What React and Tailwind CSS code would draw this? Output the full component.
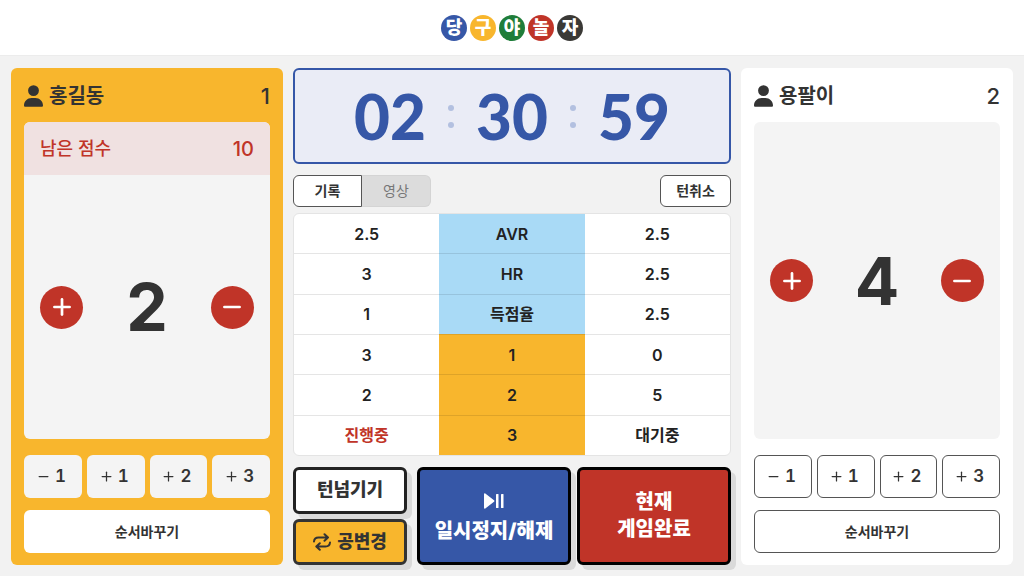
import React from 'react';
import { Minus, Plus } from 'lucide-react';
import { FaUser } from 'react-icons/fa6';

const logo = [
  { char: '당', color: 'bg-[#3657a7]' },
  { char: '구', color: 'bg-[#f8b62d]' },
  { char: '야', color: 'bg-[#1f7d3a]' },
  { char: '놀', color: 'bg-[#c03428]' },
  { char: '자', color: 'bg-[#3a3936]' },
];

const records = [
  { left: '2.5', label: 'AVR', right: '2.5', summary: true },
  { left: '3', label: 'HR', right: '2.5', summary: true },
  { left: '1', label: '득점율', right: '2.5', summary: true },
  { left: '3', label: '1', right: '0' },
  { left: '2', label: '2', right: '5' },
  { left: '진행중', label: '3', right: '대기중', playing: true },
];

const steps = [-1, 1, 2, 3];

const RoundButton = ({ label, children }) => (
  <button
    aria-label={label}
    className="flex h-[43px] w-[43px] items-center justify-center rounded-full bg-[#c03428] text-white"
  >
    {children}
  </button>
);

const PlayerPanel = ({ name, order, score, remaining, active }) => (
  <section
    className={`flex flex-col rounded-md px-[13px] py-3 ${active ? 'bg-[#f8b62d]' : 'bg-white'}`}
  >
    <div className="flex h-8 items-center justify-between">
      <h2 className="flex items-center gap-1.5 text-xl font-bold">
        <FaUser className="h-[22px] w-[19px]" />
        {name}
      </h2>
      <span className="text-[22px] font-medium">{order}</span>
    </div>

    {/* Score */}
    <div className="mt-2.5 flex flex-1 flex-col overflow-hidden rounded-md bg-[#f4f4f4]">
      {remaining !== undefined && (
        <div className="flex h-[53px] items-center justify-between bg-[#f0e1e1] px-4 text-[#c03428]">
          <span className="text-lg font-medium">남은 점수</span>
          <span className="text-xl font-medium">{remaining}</span>
        </div>
      )}
      <div className="flex flex-1 items-center justify-between px-4">
        <RoundButton label="점수 올리기">
          <Plus size={26} strokeWidth={2.5} />
        </RoundButton>
        <span className="text-[66px] leading-none font-bold">{score}</span>
        <RoundButton label="점수 내리기">
          <Minus size={26} strokeWidth={2.5} />
        </RoundButton>
      </div>
    </div>

    {/* Quick steps */}
    <div className="mt-4 grid grid-cols-4 gap-[5px]">
      {steps.map((step) => (
        <button
          key={step}
          className={`flex h-[43px] items-center justify-center gap-1 rounded-md pr-1 text-[17px] font-semibold tabular-nums ${
            active ? 'bg-[#f4f4f4]' : 'border border-[#555] bg-white'
          }`}
        >
          {step < 0 ? <Minus size={15} strokeWidth={2} /> : <Plus size={15} strokeWidth={2} />}
          {Math.abs(step)}
        </button>
      ))}
    </div>
    <button
      className={`mt-3 h-[43px] rounded-md bg-white text-sm font-bold ${
        active ? '' : 'border border-[#555]'
      }`}
    >
      순서바꾸기
    </button>
  </section>
);

const ClockDots = () => (
  <div className="flex flex-col gap-[11px]">
    <span className="h-1.5 w-1.5 rounded-full bg-[#b3c0e0]" />
    <span className="h-1.5 w-1.5 rounded-full bg-[#b3c0e0]" />
  </div>
);

const Clock = () => (
  <div
    role="timer"
    className="flex h-24 items-center justify-center gap-[22px] rounded-md border-2 border-[#3657a7] bg-[#eaecf6] font-['Lato',sans-serif] text-[62px] leading-none font-black text-[#3657a7]"
  >
    <span>02</span>
    <ClockDots />
    <span>30</span>
    <ClockDots />
    <span>59</span>
  </div>
);

const RecordTable = () => (
  <div className="mt-1.5 flex flex-1 flex-col overflow-hidden rounded-md border border-[#e4e4e4] bg-white">
    <table className="w-full flex-1 table-fixed text-center text-base font-semibold text-[#222]">
      <tbody>
        {records.map((row, i) => (
          <tr key={i} className="border-b border-black/10 last:border-b-0">
            <td className={row.playing ? 'text-[#c03428]' : ''}>{row.left}</td>
            <th
              scope="row"
              className={`font-semibold ${row.summary ? 'bg-[#a9daf6]' : 'bg-[#f8b62d]'}`}
            >
              {row.label}
            </th>
            <td>{row.right}</td>
          </tr>
        ))}
      </tbody>
    </table>
  </div>
);

const PlayPauseIcon = () => (
  <svg width="20" height="16" viewBox="0 0 20 16" fill="currentColor">
    <path d="M0 1.2v13.6c0 .8.7 1.2 1.3.7L10 8.8c.5-.4.5-1.1 0-1.5L1.3.5C.7 0 0 .4 0 1.2z" />
    <rect x="12" y="1" width="2.5" height="14" rx="0.6" />
    <rect x="17" y="1" width="2.5" height="14" rx="0.6" />
  </svg>
);

const SwapIcon = () => (
  <svg
    width="18"
    height="18"
    viewBox="0 0 18 18"
    fill="none"
    stroke="currentColor"
    strokeWidth="2"
    strokeLinecap="round"
    strokeLinejoin="round"
  >
    <path d="M1 8.5C1.2 6 3 4.5 5.500 4.500H15M11.500 1.200 15 4.500l-3.500 3.300" />
    <path d="M17 9.500c-.2 2.500-2 4-4.500 4H3.500M6.800 10.200 3.300 13.500l3.500 3.300" />
  </svg>
);

const App = () => (
  <div className="flex min-h-screen flex-col bg-[#f2f2f2] font-['Inter','Noto_Sans_CJK_KR',sans-serif] text-[#333]">
    <header className="flex h-14 items-center justify-center border-b border-[#ececec] bg-white">
      <h1 className="flex gap-[3px] text-lg font-black text-white">
        {logo.map(({ char, color }) => (
          <span
            key={char}
            className={`flex h-[26px] w-[26px] items-center justify-center rounded-full leading-none ${color}`}
          >
            {char}
          </span>
        ))}
      </h1>
    </header>

    <main className="grid flex-1 grid-cols-[272fr_438fr_272fr] gap-2.5 px-[11px] pt-3 pb-[11px]">
      <PlayerPanel name="홍길동" order={1} score={2} remaining={10} active />

      <section className="flex flex-col">
        <Clock />

        <div className="mt-[11px] flex h-8 justify-between text-sm">
          <div className="flex">
            <button className="w-[69px] rounded-l-md border border-[#555] bg-white font-bold">
              기록
            </button>
            <button className="w-[69px] rounded-r-md border border-l-0 border-[#d4d4d4] bg-[#dcdcdc] text-[#777]">
              영상
            </button>
          </div>
          <button className="w-[71px] rounded-md border border-[#555] bg-white font-bold">
            턴취소
          </button>
        </div>

        <RecordTable />

        {/* Game actions */}
        <div className="mt-[11px] flex h-[98px] gap-1.5 leading-none font-black">
          <div className="mr-1 flex w-[114px] flex-col gap-[5px] text-lg leading-none">
            <button className="flex flex-1 items-center justify-center rounded-md border-3 border-[#222] bg-white shadow-[5px_5px_0_#dadada]">
              턴넘기기
            </button>
            <button className="flex flex-1 items-center justify-center gap-1.5 rounded-md border-3 border-[#333] bg-[#f8b62d] shadow-[5px_5px_0_#dadada]">
              <SwapIcon />
              공변경
            </button>
          </div>
          <button className="flex flex-1 flex-col items-center justify-center gap-2.5 rounded-md border-3 border-black bg-[#3657a7] pt-1 text-xl text-white shadow-[5px_5px_0_#dadada]">
            <PlayPauseIcon />
            <span className="leading-6">일시정지/해제</span>
          </button>
          <button className="flex-1 rounded-md border-3 border-black bg-[#c03428] text-xl leading-[27px] text-white shadow-[5px_5px_0_#dadada]">
            현재
            <br />
            게임완료
          </button>
        </div>
      </section>

      <PlayerPanel name="용팔이" order={2} score={4} />
    </main>
  </div>
);

export default App;
